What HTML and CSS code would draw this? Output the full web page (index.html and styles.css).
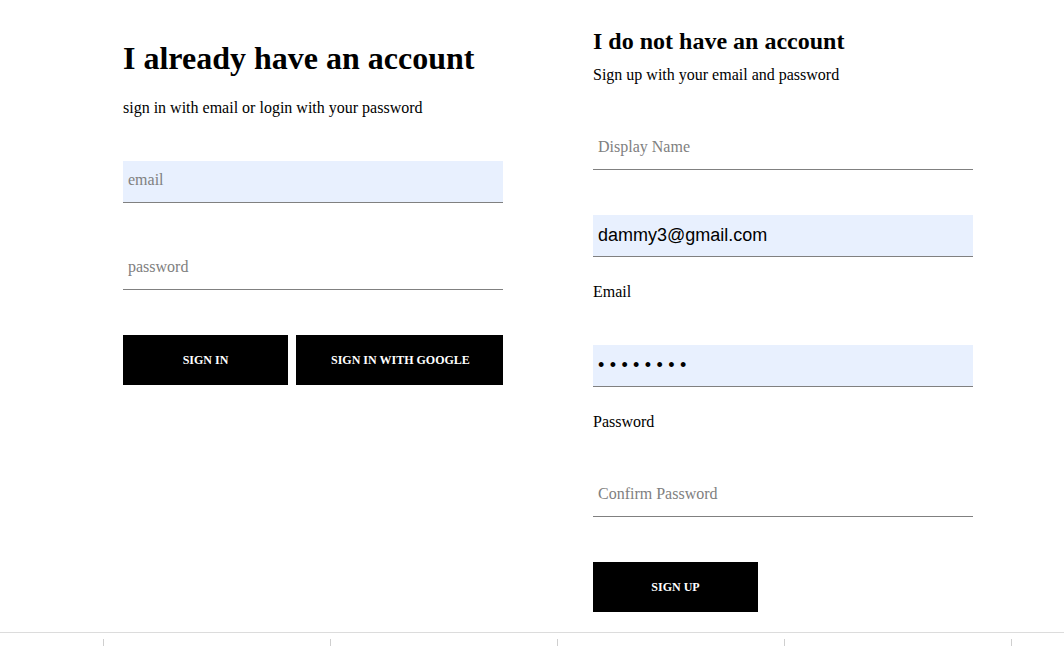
FILE: index.html
```html
<!DOCTYPE html>
<html lang="en">
<head>
<meta charset="utf-8">
<title>Sign in and sign up</title>
<link rel="stylesheet" href="styles.css">
</head>
<body>
<main class="auth">
  <section class="sign-in">
    <h1 class="sign-in-title">I already have an account</h1>
    <p class="sign-in-sub">sign in with email or login with your password</p>
    <form class="form">
      <div class="group">
        <input class="form-input autofilled" type="email" name="email" aria-label="email">
        <label class="form-label overlay">email</label>
      </div>
      <div class="group">
        <input class="form-input" type="password" name="password" aria-label="password">
        <label class="form-label overlay">password</label>
      </div>
      <div class="buttons">
        <button type="button" class="btn">Sign in</button>
        <button type="button" class="btn">Sign in with Google</button>
      </div>
    </form>
  </section>

  <section class="sign-up">
    <h2 class="sign-up-title">I do not have an account</h2>
    <p class="sign-up-sub">Sign up with your email and password</p>
    <form class="form">
      <div class="group">
        <input class="form-input" type="text" name="displayName" aria-label="Display Name">
        <label class="form-label overlay">Display Name</label>
      </div>
      <div class="group">
        <input class="form-input autofilled" type="email" name="email" value="dammy3@gmail.com">
        <label class="form-label below">Email</label>
      </div>
      <div class="group">
        <input class="form-input autofilled" type="password" name="password" value="12345678">
        <label class="form-label below">Password</label>
      </div>
      <div class="group">
        <input class="form-input" type="password" name="confirmPassword" aria-label="Confirm Password">
        <label class="form-label overlay">Confirm Password</label>
      </div>
      <div class="buttons">
        <button type="button" class="btn">Sign up</button>
      </div>
    </form>
  </section>
</main>

<div class="ruler">
  <span class="tick"></span>
  <span class="tick"></span>
  <span class="tick"></span>
  <span class="tick"></span>
  <span class="tick"></span>
</div>
</body>
</html>
```

FILE: styles.css
```css
html, body {
  margin: 0;
  padding: 0;
  background: #ffffff;
}

body {
  font-family: "Liberation Serif", "Times New Roman", serif;
  font-size: 16px;
  color: #000;
}

.auth {
  display: flex;
  gap: 90px;
  padding: 17px 0 0 123px;
  align-items: flex-start;
}

.sign-in,
.sign-up {
  width: 380px;
}

.sign-up {
  padding-top: 1px;
}

.sign-in-title {
  font-size: 32px;
  font-weight: bold;
  margin: 23px 0 22px;
  white-space: nowrap;
}

.sign-in-sub {
  margin: 0 0 -1px;
}

.sign-up-title {
  font-size: 24px;
  font-weight: bold;
  margin: 10px 0 11px;
  white-space: nowrap;
}

.sign-up-sub {
  margin: 0 0 -1px;
}

.form {
  margin: 0;
}

.group {
  position: relative;
  margin: 45px 0;
}

.form-input {
  display: block;
  box-sizing: border-box;
  width: 100%;
  margin: 0;
  padding: 10px 10px 10px 5px;
  border: none;
  border-bottom: 1px solid #808080;
  border-radius: 0;
  background: none;
  font-family: "Liberation Sans", Arial, sans-serif;
  font-size: 18px;
  line-height: normal;
  color: #000;
  outline: none;
}

.form-input[type="password"] {
  letter-spacing: 0.3em;
}

.form-input.autofilled {
  background: #e8f0fe;
}

.form-label {
  font-family: "Liberation Serif", "Times New Roman", serif;
  font-size: 16px;
  font-weight: normal;
}

.form-label.overlay {
  position: absolute;
  left: 5px;
  top: 10px;
  color: #808080;
  pointer-events: none;
}

.form-label.below {
  display: block;
  margin: 26px 0 -1px;
  color: #000;
}

.buttons {
  display: flex;
  gap: 8px;
  margin-top: 45px;
}

.btn {
  min-width: 165px;
  height: 50px;
  line-height: 50px;
  padding: 0 35px;
  border: none;
  background: #000;
  color: #fff;
  font-family: "Liberation Serif", "Times New Roman", serif;
  font-size: 12px;
  font-weight: bold;
  text-transform: uppercase;
  letter-spacing: 0;
  cursor: pointer;
  white-space: nowrap;
}

.ruler {
  position: fixed;
  left: 0;
  right: 0;
  top: 632px;
  height: 14px;
  border-top: 1px solid #dcdcdc;
  box-sizing: border-box;
  display: flex;
  align-items: flex-end;
  gap: 226px;
  padding-left: 103px;
  background: #fff;
}

.tick {
  width: 1px;
  height: 7px;
  background: #cfcfcf;
}
```
